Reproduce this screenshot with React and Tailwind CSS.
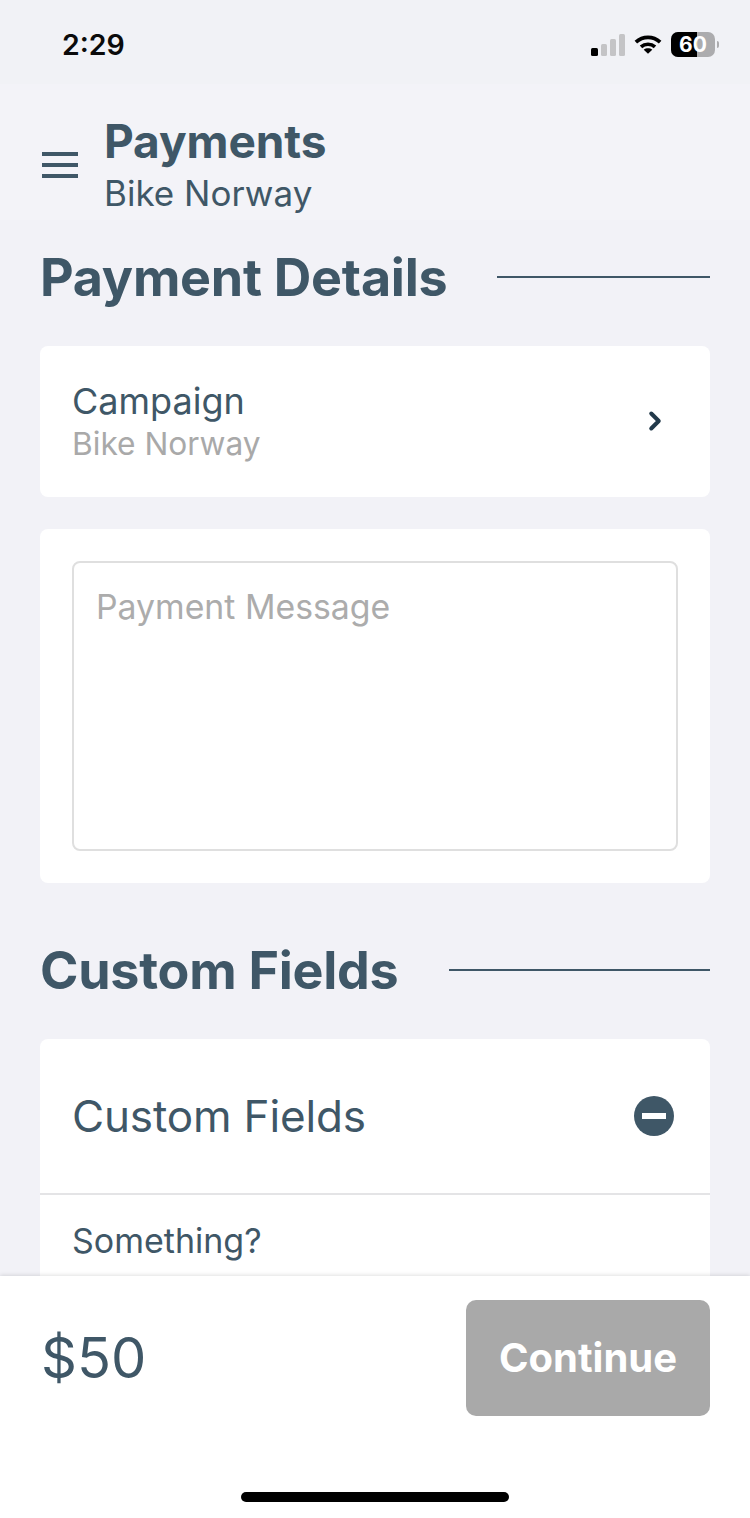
import React from 'react';
import { ChevronRight } from 'lucide-react';

const slate = 'text-[#3f5767]';

function StatusIcons() {
  return (
    <div className="flex items-center gap-[9px]">
      <svg width="35" height="22" viewBox="0 0 35 22">
        <rect x="1" y="14" width="7" height="8" rx="1.5" fill="#000" />
        <rect x="11" y="10" width="6" height="12" rx="1.5" fill="#c4c4c6" />
        <rect x="20" y="5" width="6" height="17" rx="1.5" fill="#c4c4c6" />
        <rect x="29" y="0" width="6" height="22" rx="1.5" fill="#c4c4c6" />
      </svg>
      <svg width="28" height="21" viewBox="0 0 30 22" fill="none" stroke="#000" strokeWidth="4">
        <path d="M2 8.5C9.5 1.5 20.5 1.5 28 8.5" />
        <path d="M7.5 13.5C11.8 9.8 18.2 9.8 22.5 13.5" />
        <path d="M15 21l-4.6-4.4c2.7-2 6.5-2 9.2 0z" fill="#000" stroke="none" />
      </svg>
      <div className="flex items-center gap-[2px]">
        <div className="relative w-[44px] h-[25px] rounded-[7px] overflow-hidden bg-[#acacae] flex items-center justify-center">
          <div className="absolute left-0 top-0 bottom-0 w-[26px] bg-black" />
          <span className="relative text-white text-[21px] font-bold leading-none font-['Inter',sans-serif]">60</span>
        </div>
        <div className="w-[2px] h-[7px] rounded-r bg-[#acacae]" />
      </div>
    </div>
  );
}

function SectionTitle({ children }) {
  return (
    <div className="flex items-center gap-[50px] mx-[40px]">
      <h2 className={`text-[52px] leading-[58px] pt-[2px] font-bold whitespace-nowrap tracking-[-0.25px] ${slate}`}>{children}</h2>
      <div className="flex-1 h-[2px] bg-[#3f5767]" />
    </div>
  );
}

export default function App() {
  return (
    <div className="relative w-[750px] h-[1518px] overflow-hidden bg-[#f2f2f7] font-['Inter',sans-serif]">
      {/* status bar */}
      <div className="h-[84px] bg-[#f1f2f6] flex items-start justify-between pt-[27px] pl-[62px] pr-[31px]">
        <span className="text-[28.5px] leading-[35px] font-semibold text-[#0b0b0b]">2:29</span>
        <div className="pt-[5px]">
          <StatusIcons />
        </div>
      </div>

      {/* header */}
      <div className="h-[136px] bg-[#f3f3f8] flex items-start pl-[42px] pt-[30px]">
        <div className="flex flex-col gap-[7px] w-[36px] mt-[38px]">
          <div className="h-[4px] bg-[#3f5767]" />
          <div className="h-[4px] bg-[#3f5767]" />
          <div className="h-[4px] bg-[#3f5767]" />
        </div>
        <div className="ml-[26px]">
          <div className={`text-[46px] leading-[54px] font-bold tracking-[-0.1px] ${slate}`}>Payments</div>
          <div className={`mt-[3px] text-[35px] leading-[44px] ${slate}`}>Bike Norway</div>
        </div>
      </div>

      <div className="pt-[27px]">
        <SectionTitle>Payment Details</SectionTitle>

        <div className="mx-[40px] mt-[39px] h-[151px] bg-white rounded-[8px] flex items-center justify-between pl-[32px] pr-[44px]">
          <div>
            <div className={`text-[36px] leading-[44px] -mt-[1px] ${slate}`}>Campaign</div>
            <div className="text-[31.7px] leading-[40px] mt-[1px] text-[#a9a9a9]">Bike Norway</div>
          </div>
          <ChevronRight size={30} strokeWidth={3.2} className="text-[#22394a] -mr-[4px] -mt-[2px]" />
        </div>

        <div className="mx-[40px] mt-[32px] h-[354px] bg-white rounded-[8px] p-[32px]">
          <div className="h-full border-2 border-[#dfdfdf] rounded-[8px] pl-[22px] pt-[22px]">
            <span className="text-[33.8px] leading-[44px] text-[#acacac]">Payment Message</span>
          </div>
        </div>

        <div className="mt-[57px]">
          <SectionTitle>Custom Fields</SectionTitle>
        </div>

        <div className="mx-[40px] mt-[39px] bg-white rounded-t-[8px]">
          <div className="h-[156px] border-b-2 border-[#e4e4e6] flex items-center justify-between pl-[32px] pr-[36px]">
            <span className={`text-[44px] leading-[54px] tracking-[-0.15px] ${slate}`}>Custom Fields</span>
            <div className="w-[40px] h-[40px] rounded-full bg-[#3f5767] flex items-center justify-center">
              <div className="w-[24px] h-[6px] bg-white" />
            </div>
          </div>
          <div className={`pl-[32px] pt-[25px] pb-[60px] text-[34px] leading-[42px] ${slate}`}>Something?</div>
        </div>
      </div>

      {/* bottom bar */}
      <div className="absolute left-0 right-0 bottom-0 h-[242px] bg-white shadow-[0_-1px_4px_rgba(0,0,0,0.12)]">
        <div className="flex items-start justify-between pl-[41px] pr-[40px] pt-[24px]">
          <span className={`text-[56px] leading-[116px] ${slate}`}>$50</span>
          <button className="w-[244px] h-[116px] rounded-[10px] bg-[#a9a9a9] text-white text-[40px] font-bold">Continue</button>
        </div>
        <div className="absolute left-[241px] bottom-[16px] w-[268px] h-[10px] rounded-full bg-black" />
      </div>
    </div>
  );
}
